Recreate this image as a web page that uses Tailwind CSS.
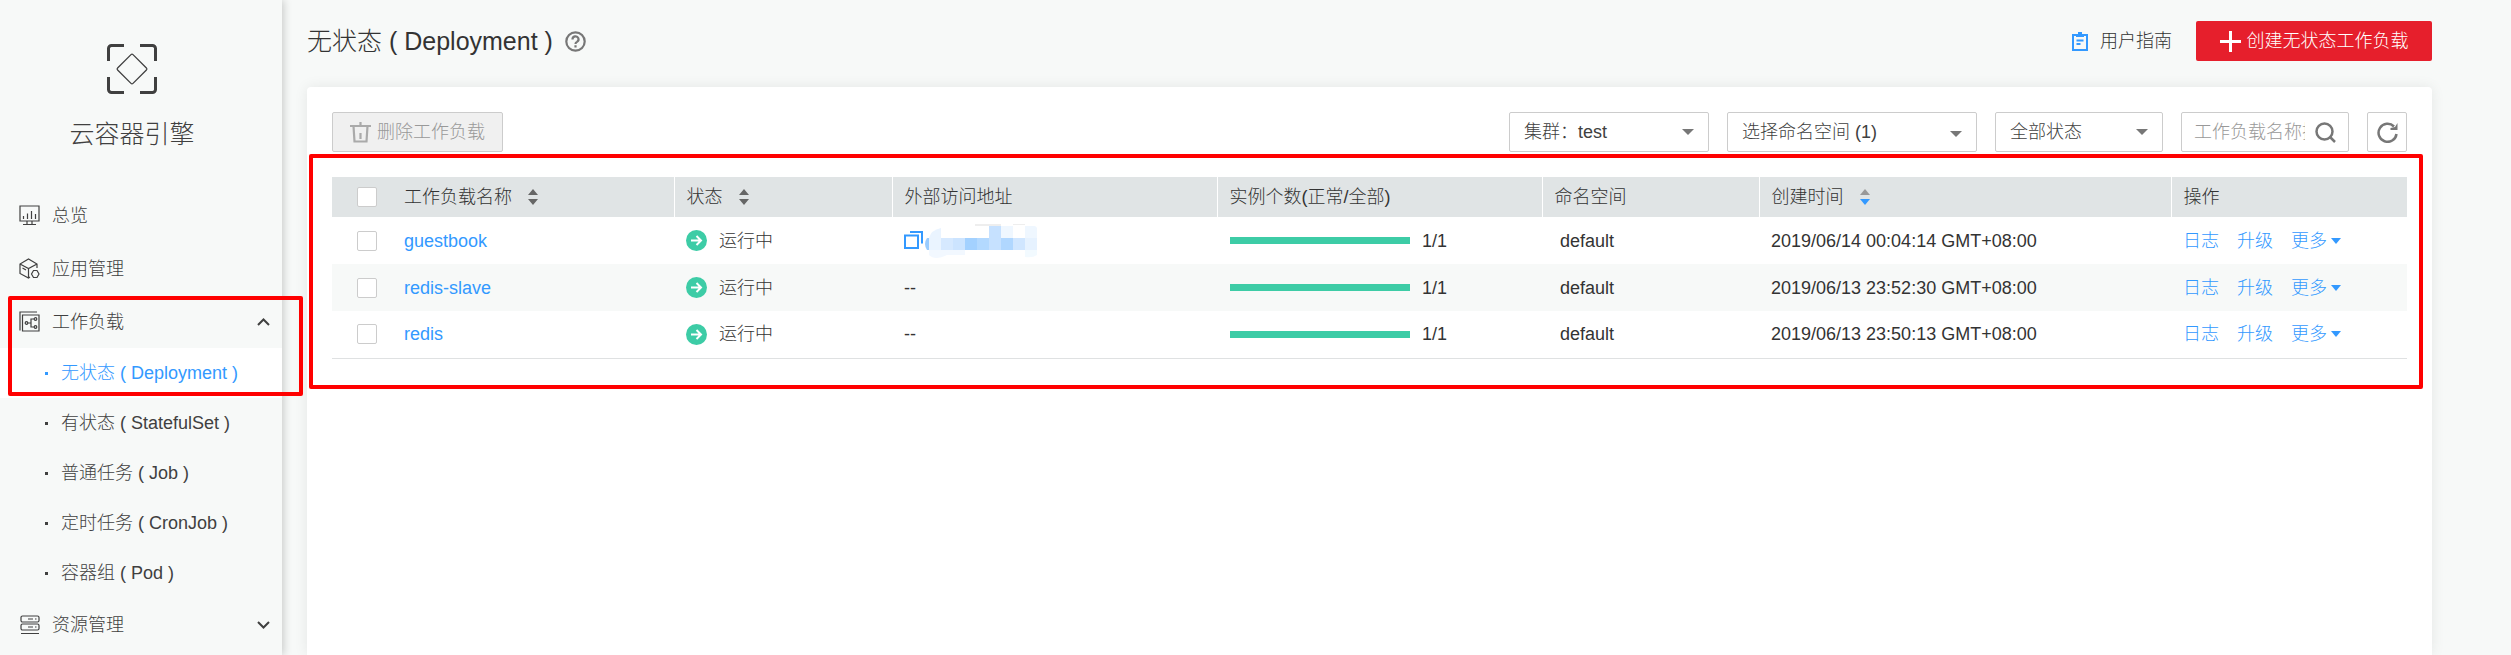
<!DOCTYPE html>
<html lang="zh-CN">
<head>
  <meta charset="UTF-8">
  <title>云容器引擎</title>
  <script src="https://cdn.jsdelivr.net/npm/@tailwindcss/browser@4"></script>
</head>
<body class="bg-[#f7f9f8] text-[#404040] text-[18px] leading-6 font-light font-['Liberation_Sans','Noto_Sans_CJK_SC',sans-serif]">
  <div class="flex min-h-screen">

    <!-- menu lateral -->
    <nav class="relative z-10 w-[282px] shrink-0 shadow-[2px_0_8px_rgba(0,0,0,0.18)] bg-[#f7f9f8]">
      <div class="flex flex-col items-center pt-11 pr-[18px] h-[189px]">
        <svg class="size-[50px]" viewBox="0 0 50 50" fill="none" stroke="#404040">
          <path stroke-width="3" d="M1.500 17V4.500a3 3 0 0 1 3-3H17M33 1.500h12.500a3 3 0 0 1 3 3V17M48.500 33v12.500a3 3 0 0 1-3 3H33M17 48.500H4.500a3 3 0 0 1-3-3V33"/>
          <path stroke-width="1.300" d="M24 10.600q1-1 2 0L39.400 24q1 1 0 2L26 39.400q-1 1-2 0L10.600 26q-1-1 0-2z"/>
        </svg>
        <h2 class="mt-6 text-[25px] leading-8">云容器引擎</h2>
      </div>

      <a href="#" class="flex items-center h-[53px] pl-[19px] gap-3">
        <svg class="size-[21px]" viewBox="0 0 21 21" fill="none" stroke="#404040" stroke-width="1.200">
          <path d="M1 1h19v15H1zM8 16v3M13 16v3M4 19.500h13M4.500 11v3M8.500 8.500V14M12.500 6v8M16.500 9v5"/>
        </svg>
        总览
      </a>
      <a href="#" class="flex items-center h-[53px] pl-[19px] gap-3">
        <svg class="size-[21px]" viewBox="0 0 21 21" fill="none" stroke="#404040" stroke-width="1.200">
          <path d="M11 19l-1.500 1L1 15.500V6l8.500-5L18 6v4M1 6l8.500 4.500L18 6M9.500 10.500V20M3.500 10l3.500 2"/>
          <path d="M14.500 12.500h3.500l2 3.500-2 3.500h-3.500l-2-3.500z"/>
        </svg>
        应用管理
      </a>

      <div class="relative">
        <a href="#" class="flex items-center h-[53px] pl-[19px] pr-3 gap-3">
          <svg class="size-[21px]" viewBox="0 0 21 21" fill="none" stroke="#404040" stroke-width="1.200">
            <path d="M1 19.500V1h17M3.500 4H20v16H3.500z"/>
            <circle cx="7.500" cy="12" r="1.300"/><circle cx="16.500" cy="8" r="1.300"/><circle cx="16.500" cy="16" r="1.300"/>
            <path d="M9 12h3M15 8h-3v8h3"/>
          </svg>
          <span class="flex-1">工作负载</span>
          <svg class="w-[13px] h-2" viewBox="0 0 13 8" fill="none" stroke="#404040" stroke-width="2"><path d="M1 7l5.500-5.500L12 7"/></svg>
        </a>
        <a href="#" class="flex items-center h-[50px] pl-[45px] gap-[13px] bg-white text-[#3399ff]"><span class="size-[3px] bg-[#3399ff]"></span>无状态 ( Deployment )</a>
        <div class="absolute z-20 left-2 top-px -right-[21px] h-[100px] border-4 border-[#ff0000] rounded-[2px] pointer-events-none"></div>
      </div>
      <a href="#" class="flex items-center h-[50px] pl-[45px] gap-[13px]"><span class="size-[3px] bg-[#404040]"></span>有状态 ( StatefulSet )</a>
      <a href="#" class="flex items-center h-[50px] pl-[45px] gap-[13px]"><span class="size-[3px] bg-[#404040]"></span>普通任务 ( Job )</a>
      <a href="#" class="flex items-center h-[50px] pl-[45px] gap-[13px]"><span class="size-[3px] bg-[#404040]"></span>定时任务 ( CronJob )</a>
      <a href="#" class="flex items-center h-[50px] pl-[45px] gap-[13px]"><span class="size-[3px] bg-[#404040]"></span>容器组 ( Pod )</a>

      <a href="#" class="flex items-center h-[53px] pl-[19px] pr-3 gap-3">
        <svg class="size-[21px]" viewBox="0 0 21 21" fill="none" stroke="#404040" stroke-width="1.200">
          <rect x="2" y="2" width="18" height="6" rx="1.500"/><rect x="2" y="10" width="18" height="6" rx="1.500"/>
          <path d="M2 19.500h18M9 5h5M9 13h5M16 5h1.500M16 13h1.500"/>
        </svg>
        <span class="flex-1">资源管理</span>
        <svg class="w-[13px] h-2" viewBox="0 0 13 8" fill="none" stroke="#404040" stroke-width="2"><path d="M1 1l5.500 5.500L12 1"/></svg>
      </a>
    </nav>

    <main class="flex-1 flex flex-col pl-[25px] pr-[79px]">
      <header class="flex items-center h-[87px] pb-[5px]">
        <h1 class="text-[25px] leading-8 text-[#333]">无状态 ( Deployment )</h1>
        <svg class="ml-3 size-[21px]" viewBox="0 0 21 21" fill="none" stroke="#777" stroke-width="2.200">
          <circle cx="10.500" cy="10.500" r="9.200"/>
          <path d="M7.500 8.500a3 3 0 1 1 4.500 2.400q-1.500.8-1.500 2M10.500 14.200v2.300"/>
        </svg>
        <a href="#" class="ml-auto flex items-center gap-3 text-[#333]">
          <svg class="w-4 h-[19px]" viewBox="0 0 16 19" fill="none" stroke="#3399ff" stroke-width="2">
            <path d="M4 3H1v15h14V3h-3M4.500 8.500h7M4.500 12h4"/><path fill="#3399ff" stroke="none" d="M4 2h2V0h4v2h2v3H4z"/>
          </svg>
          用户指南
        </a>
        <button class="ml-6 flex items-center justify-center gap-1.5 w-[236px] h-10 rounded-[2px] bg-[#e61f2c] text-white">
          <svg class="size-[21px]" viewBox="0 0 21 21" stroke="#fff" stroke-width="3"><path d="M10.500 0v21M0 10.500h21"/></svg>
          创建无状态工作负载
        </button>
      </header>

      <section class="flex-1 bg-white rounded-t p-[25px] shadow-[0_0_14px_rgba(0,0,0,0.08)]">
        <div class="flex items-center gap-[18px]">
          <button disabled class="mr-auto flex items-center justify-center gap-1.5 w-[171px] h-10 border border-[#ccc] rounded-[2px] bg-[#f0f0f0] text-[#999]">
            <svg class="size-[21px]" viewBox="0 0 21 21" fill="none" stroke="#aaa" stroke-width="2.200">
              <path d="M0 4h21M10.500 0v4M3.500 4l1 15.500h12l1-15.500M10.500 11v6"/>
            </svg>
            删除工作负载
          </button>
          <div class="relative">
            <select aria-label="集群" class="appearance-none w-[200px] h-10 pl-3.5 border border-[#ccc] rounded-[2px] bg-white"><option>集群：test</option></select>
            <svg class="absolute right-[15px] top-[17px] w-3 h-[6px] pointer-events-none" viewBox="0 0 12 6" fill="#777"><path d="M0 0h12L6 6z"/></svg>
          </div>
          <div class="relative">
            <select aria-label="命名空间" class="appearance-none w-[250px] h-10 pl-3.5 border border-[#ccc] rounded-[2px] bg-white"><option>选择命名空间 (1)</option></select>
            <svg class="absolute right-[15px] top-[19px] w-3 h-[6px] pointer-events-none" viewBox="0 0 12 6" fill="#777"><path d="M0 0h12L6 6z"/></svg>
          </div>
          <div class="relative">
            <select aria-label="状态" class="appearance-none w-[168px] h-10 pl-3.5 border border-[#ccc] rounded-[2px] bg-white"><option>全部状态</option></select>
            <svg class="absolute right-[15px] top-[17px] w-3 h-[6px] pointer-events-none" viewBox="0 0 12 6" fill="#777"><path d="M0 0h12L6 6z"/></svg>
          </div>
          <div class="flex items-center w-[168px] h-10 px-3 border border-[#ccc] rounded-[2px]">
            <input type="text" aria-label="搜索" placeholder="工作负载名称搜索" class="flex-1 min-w-0 mr-2.5 outline-none placeholder:text-[#999]">
            <svg class="size-[21px] shrink-0" viewBox="0 0 21 21" fill="none" stroke="#777" stroke-width="2.500"><circle cx="9.500" cy="9.500" r="8"/><path d="M14.500 14.500L20 20"/></svg>
          </div>
          <button aria-label="刷新" class="flex items-center justify-center size-10 border border-[#ccc] rounded-[2px]">
            <svg class="size-[21px]" viewBox="0 0 21 21" fill="none" stroke="#777" stroke-width="2.500"><path d="M17 4.500A9 9 0 1 0 19.500 12"/><path fill="#777" stroke="none" d="M20.500 1v7h-7V6L18 5z"/></svg>
          </button>
        </div>

        <div class="relative mt-[25px]">
          <table class="w-full table-fixed border-b border-[#dfe1e2] text-left text-[#333]">
            <colgroup>
              <col class="w-[60px]"><col class="w-[282px]"><col class="w-[218px]"><col class="w-[325px]"><col class="w-[325px]"><col class="w-[217px]"><col class="w-[412px]"><col class="w-[236px]">
            </colgroup>
            <thead class="bg-[#e0e4e5]">
              <tr class="h-10">
                <th class="pl-[25px]"><input type="checkbox" aria-label="全选" class="block appearance-none size-5 border border-[#ccc] rounded-[2px] bg-white"></th>
                <th class="pl-3 font-light border-r border-white">
                  <div class="flex items-center gap-4">工作负载名称
                    <svg class="w-[10px] h-4" viewBox="0 0 10 16" fill="#666"><path d="M0 6h10L5 0zM0 10h10l-5 6z"/></svg>
                  </div>
                </th>
                <th class="pl-3 font-light border-r border-white">
                  <div class="flex items-center gap-4">状态
                    <svg class="w-[10px] h-4" viewBox="0 0 10 16" fill="#666"><path d="M0 6h10L5 0zM0 10h10l-5 6z"/></svg>
                  </div>
                </th>
                <th class="pl-3 font-light border-r border-white">外部访问地址</th>
                <th class="pl-3 font-light border-r border-white">实例个数(正常/全部)</th>
                <th class="pl-3 font-light border-r border-white">命名空间</th>
                <th class="pl-3 font-light border-r border-white">
                  <div class="flex items-center gap-4">创建时间
                    <svg class="w-[10px] h-4" viewBox="0 0 10 16"><path fill="#999" d="M0 6h10L5 0z"/><path fill="#3399ff" d="M0 10h10l-5 6z"/></svg>
                  </div>
                </th>
                <th class="pl-3 font-light">操作</th>
              </tr>
            </thead>
            <tbody>
              <tr class="h-[47px]">
                <td class="pl-[25px]"><input type="checkbox" aria-label="guestbook" class="block appearance-none size-5 border border-[#ccc] rounded-[2px] bg-white"></td>
                <td class="pl-3"><a href="#" class="text-[#3399ff]">guestbook</a></td>
                <td class="pl-3">
                  <div class="flex items-center gap-3">
                    <svg class="size-[21px]" viewBox="0 0 21 21" fill="none" stroke="#fff" stroke-width="2"><circle cx="10.500" cy="10.500" r="10.500" fill="#3dcca6" stroke="none"/><path d="M5 10.500h10M10.500 6l4.500 4.500-4.500 4.500"/></svg>
                    运行中
                  </div>
                </td>
                <td class="pl-3">
                  <div class="flex items-center">
                    <svg class="size-[19px]" viewBox="0 0 19 19" fill="none" stroke="#3399ff" stroke-width="2"><path d="M1 4.500h13V17H1zM6 1h12v11.500"/></svg>
                    <!-- dirección IP oculta -->
                    <svg class="w-[114px] h-[34px]" viewBox="0 0 114 34">
                      <path fill="#eaf4ff" d="M6 14Q8 6 18 4v22H6z"/>
                      <path fill="#99ccff" d="M6 14v12H4q-4-6 0-12z"/>
                      <path fill="#f2f8ff" d="M6 26h36v5H24q-12 6-18 0z"/>
                      <path fill="#d6e9ff" d="M18 14h12v12H18z"/>
                      <path fill="#cce4ff" d="M30 14h12v12H30z"/>
                      <path fill="#a3d1ff" d="M42 14h12v12H42z"/>
                      <path fill="#b3d9ff" d="M54 14h12v12H54z"/>
                      <path fill="#c6e1ff" d="M66 2h12v24H66z"/>
                      <path fill="#eff7ff" d="M78 2h12v12H78z"/>
                      <path fill="#b0d7ff" d="M78 14h12v12H78z"/>
                      <path fill="#d0e6ff" d="M90 14h12v12H90z"/>
                      <path fill="#eff7ff" d="M102 2h9q3 0 3 3v9h-12z"/>
                      <path fill="#e6f2ff" d="M102 14h12v12h-12z"/>
                      <path fill="#f2faff" d="M102 26h12v5q-4 3-12 2z"/>
                      <path fill="#eee" d="M52 0h26v2H52zM90 0h12v1H90z"/>
                    </svg>
                  </div>
                </td>
                <td class="pl-[13px]"><div class="flex items-center gap-3"><span class="w-[180px] h-[7px] bg-[#3dcca6]"></span>1/1</div></td>
                <td class="pl-[18px]">default</td>
                <td class="pl-3">2019/06/14 00:04:14 GMT+08:00</td>
                <td class="pl-3">
                  <div class="flex items-center gap-[18px] text-[#3399ff]">
                    <a href="#">日志</a><a href="#">升级</a>
                    <a href="#" class="flex items-center gap-1">更多<svg class="w-[10px] h-[6px]" viewBox="0 0 10 6" fill="#3399ff"><path d="M0 0h10L5 6z"/></svg></a>
                  </div>
                </td>
              </tr>
              <tr class="h-[47px] bg-[#f7f9f8]">
                <td class="pl-[25px]"><input type="checkbox" aria-label="redis-slave" class="block appearance-none size-5 border border-[#ccc] rounded-[2px] bg-white"></td>
                <td class="pl-3"><a href="#" class="text-[#3399ff]">redis-slave</a></td>
                <td class="pl-3">
                  <div class="flex items-center gap-3">
                    <svg class="size-[21px]" viewBox="0 0 21 21" fill="none" stroke="#fff" stroke-width="2"><circle cx="10.500" cy="10.500" r="10.500" fill="#3dcca6" stroke="none"/><path d="M5 10.500h10M10.500 6l4.500 4.500-4.500 4.500"/></svg>
                    运行中
                  </div>
                </td>
                <td class="pl-3">--</td>
                <td class="pl-[13px]"><div class="flex items-center gap-3"><span class="w-[180px] h-[7px] bg-[#3dcca6]"></span>1/1</div></td>
                <td class="pl-[18px]">default</td>
                <td class="pl-3">2019/06/13 23:52:30 GMT+08:00</td>
                <td class="pl-3">
                  <div class="flex items-center gap-[18px] text-[#3399ff]">
                    <a href="#">日志</a><a href="#">升级</a>
                    <a href="#" class="flex items-center gap-1">更多<svg class="w-[10px] h-[6px]" viewBox="0 0 10 6" fill="#3399ff"><path d="M0 0h10L5 6z"/></svg></a>
                  </div>
                </td>
              </tr>
              <tr class="h-[47px]">
                <td class="pl-[25px]"><input type="checkbox" aria-label="redis" class="block appearance-none size-5 border border-[#ccc] rounded-[2px] bg-white"></td>
                <td class="pl-3"><a href="#" class="text-[#3399ff]">redis</a></td>
                <td class="pl-3">
                  <div class="flex items-center gap-3">
                    <svg class="size-[21px]" viewBox="0 0 21 21" fill="none" stroke="#fff" stroke-width="2"><circle cx="10.500" cy="10.500" r="10.500" fill="#3dcca6" stroke="none"/><path d="M5 10.500h10M10.500 6l4.500 4.500-4.500 4.500"/></svg>
                    运行中
                  </div>
                </td>
                <td class="pl-3">--</td>
                <td class="pl-[13px]"><div class="flex items-center gap-3"><span class="w-[180px] h-[7px] bg-[#3dcca6]"></span>1/1</div></td>
                <td class="pl-[18px]">default</td>
                <td class="pl-3">2019/06/13 23:50:13 GMT+08:00</td>
                <td class="pl-3">
                  <div class="flex items-center gap-[18px] text-[#3399ff]">
                    <a href="#">日志</a><a href="#">升级</a>
                    <a href="#" class="flex items-center gap-1">更多<svg class="w-[10px] h-[6px]" viewBox="0 0 10 6" fill="#3399ff"><path d="M0 0h10L5 6z"/></svg></a>
                  </div>
                </td>
              </tr>
            </tbody>
          </table>
          <div class="absolute -left-[23px] -top-[23px] -right-4 -bottom-[30px] border-4 border-[#ff0000] rounded-[2px] pointer-events-none"></div>
        </div>
      </section>
    </main>
  </div>
</body>
</html>
